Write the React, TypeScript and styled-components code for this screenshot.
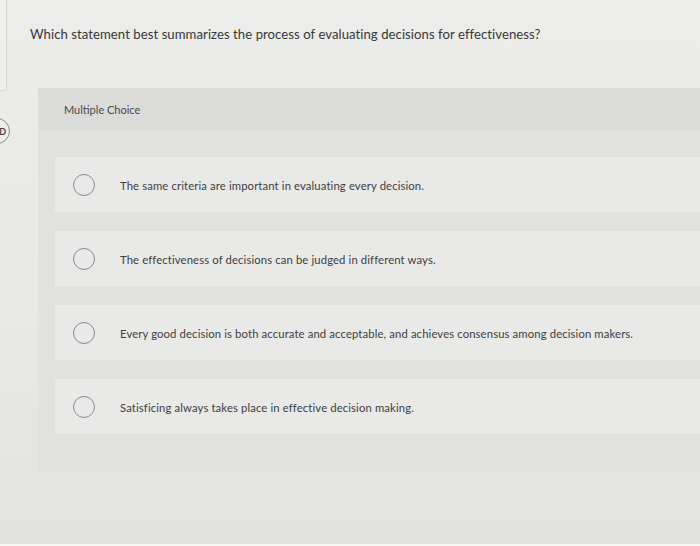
import React from 'react';
import styled, { createGlobalStyle } from 'styled-components';

const GlobalStyle = createGlobalStyle`
  html, body {
    margin: 0;
    padding: 0;
    background: #e8e8e6;
  }
  body {
    font-family: Lato, "Open Sans", "Liberation Sans", sans-serif;
  }
`;

const options = [
  'The same criteria are important in evaluating every decision.',
  'The effectiveness of decisions can be judged in different ways.',
  'Every good decision is both accurate and acceptable, and achieves consensus among decision makers.',
  'Satisficing always takes place in effective decision making.',
];

const Page = styled.div`
  display: flex;
  width: 700px;
  height: 546px;
  overflow: hidden;
  background: linear-gradient(180deg, #ececea 0%, #e8e8e6 60%, #e2e2e0 100%);
  border-bottom: 2px solid #f7f7f5;
  box-sizing: border-box;
`;

const Rail = styled.div`
  width: 7px;
  flex-shrink: 0;
  display: flex;
  flex-direction: column;
`;

const RailCard = styled.div`
  height: 90px;
  background: #efefed;
  border-right: 1px solid #d6d6d4;
  border-bottom: 1px solid #d6d6d4;
  border-bottom-right-radius: 3px;
`;

const RoundButton = styled.div`
  width: 26px;
  height: 26px;
  margin-top: 27px;
  margin-left: -16px;
  border: 1px solid #8c8c8c;
  border-radius: 50%;
  background: #ededeb;
  display: flex;
  align-items: center;
  justify-content: flex-end;
  padding-right: 3px;
  box-sizing: border-box;
  font-size: 9px;
  font-weight: 700;
  color: #444;
`;

const Main = styled.div`
  flex: 1;
  padding: 26px 0 0 23px;
  display: flex;
  flex-direction: column;
`;

const Question = styled.div`
  font-size: 13.15px;
  line-height: 16px;
  color: #383838;
  letter-spacing: 0.05px;
`;

const Panel = styled.div`
  margin: 46px -10px 0 8px;
  background: #e1e1df;
`;

const PanelHeader = styled.div`
  height: 42px;
  padding-left: 26px;
  display: flex;
  align-items: center;
  background: #dbdbd9;
  font-size: 11px;
  color: #4a4a4a;
`;

const OptionList = styled.div`
  padding: 27px 0 38px 17px;
  display: flex;
  flex-direction: column;
  gap: 19px;
`;

const OptionRow = styled.div`
  height: 55px;
  padding-left: 18px;
  display: flex;
  align-items: center;
  background: #e9e9e7;
`;

const Radio = styled.span`
  width: 22px;
  height: 22px;
  border: 1.5px solid #8a8a90;
  border-radius: 50%;
  box-sizing: border-box;
  flex-shrink: 0;
  margin-right: 25px;
`;

const OptionText = styled.span`
  font-size: 11.3px;
  color: #3e3e3e;
  letter-spacing: 0.12px;
  padding-top: 2px;
`;

const App: React.FC = () => {
  return (
    <>
      <GlobalStyle />
      <Page>
        <Rail>
          <RailCard />
          <RoundButton>D</RoundButton>
        </Rail>
        <Main>
          <Question>
            Which statement best summarizes the process of evaluating decisions for effectiveness?
          </Question>
          <Panel>
            <PanelHeader>Multiple Choice</PanelHeader>
            <OptionList>
              {options.map((text) => (
                <OptionRow key={text}>
                  <Radio />
                  <OptionText>{text}</OptionText>
                </OptionRow>
              ))}
            </OptionList>
          </Panel>
        </Main>
      </Page>
    </>
  );
};

export default App;
